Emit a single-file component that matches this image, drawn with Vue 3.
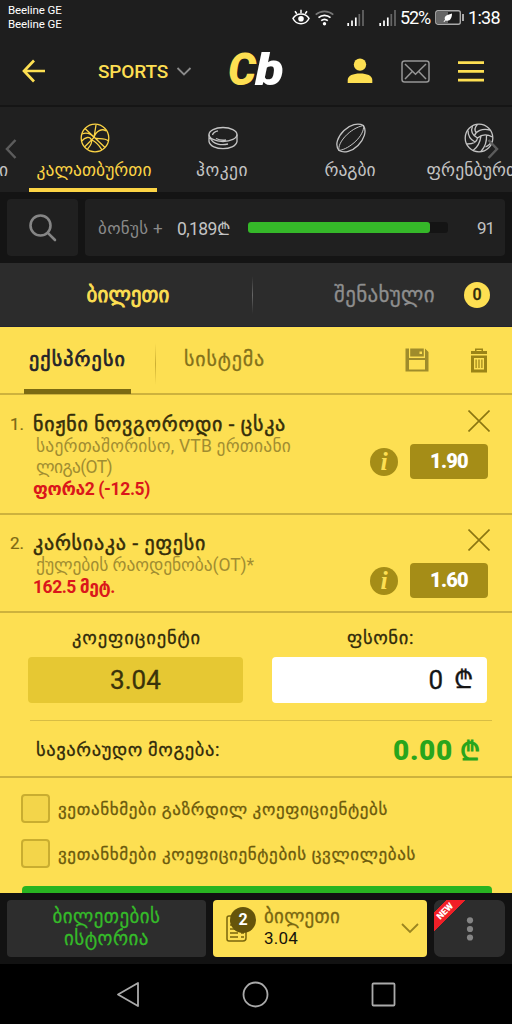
<script setup>
const vFit = {
  mounted(el, { value }) {
    const range = document.createRange()
    range.selectNodeContents(el)
    const natural = range.getBoundingClientRect().width
    const count = [...el.textContent.trim()].length
    el.style.letterSpacing = `${((value - natural) / count).toFixed(3)}px`
  },
}

const sports = [
  { id: 'basket', name: 'კალათბურთი', width: 115, active: true },
  { id: 'hockey', name: 'ჰოკეი', width: 52 },
  { id: 'rugby', name: 'რაგბი', width: 51 },
  { id: 'volley', name: 'ფრენბურთი', width: 103 },
]

const bets = [
  {
    no: '1.',
    teams: 'ნიჟნი ნოვგოროდი - ცსკა',
    teamsWidth: 253,
    league: [
      { text: 'საერთაშორისო, VTB ერთიანი', width: 255 },
      { text: 'ლიგა(OT)', width: 76 },
    ],
    pick: 'ფორა2 (-12.5)',
    pickWidth: 117,
    odd: '1.90',
  },
  {
    no: '2.',
    teams: 'კარსიაკა - ეფესი',
    teamsWidth: 173,
    league: [{ text: 'ქულების რაოდენობა(OT)*', width: 218 }],
    pick: '162.5 მეტ.',
    pickWidth: 82,
    odd: '1.60',
  },
]

const agreements = [
  { text: 'ვეთანხმები გაზრდილ კოეფიციენტებს', width: 330 },
  { text: 'ვეთანხმები კოეფიციენტების ცვლილებას', width: 358 },
]

const progress = 91
</script>

<template>
  <div class="screen">
    <div class="status">
      <div class="carrier">Beeline GE<br />Beeline GE</div>
      <div class="indicators">
        <svg class="eye" width="18" height="17" viewBox="0 0 18 17" fill="none" stroke="#fff" stroke-width="1.5">
          <path d="M1 9.5C4.5 3.6 13.500 3.600 17 9.500C13.500 16.500 4.500 16.500 1 9.500Z" />
          <circle cx="9" cy="9.700" r="2.800" fill="#fff" stroke="none" />
          <path d="M9 4V.800M4.800 4.800L3 2.200M13.200 4.800L15 2.200" />
        </svg>
        <svg class="wifi" width="19" height="16" viewBox="0 0 19 16" fill="none" stroke-width="1.600">
          <path d="M.700 4.700C5.800.200 13.200.200 18.300 4.700" stroke="#777" />
          <path d="M3.500 7.700C7 4.600 12 4.600 15.500 7.700M6.200 10.700C8.200 9 10.800 9 12.800 10.700" stroke="#fff" />
          <circle cx="9.500" cy="13.700" r="1.700" fill="#fff" />
        </svg>
        <svg v-for="n in 2" :key="n" :class="['signal', `signal-${n}`]" width="17" height="16" viewBox="0 0 17 16" stroke-width="1.700">
          <path d="M1.200 16V13M5 16V10.500M8.800 16V7.500" stroke="#fff" />
          <path d="M12.300 16V4M16 16V0" stroke="#666" />
        </svg>
        <span class="percent" v-fit="30">52%</span>
        <svg class="battery" width="29" height="15" viewBox="0 0 29 15">
          <rect x=".800" y=".800" width="24.500" height="13.400" rx="2" fill="none" stroke="#aaa" stroke-width="1.400" />
          <rect x="2" y="2" width="11" height="11" fill="#666" />
          <path d="M8.500 11.500L10 9.700C8.500 5.500 13 5 17 3.500C17 8 15 12 10.600 10.400L9.300 12Z" fill="#fff" />
          <path d="M28 4V11" stroke="#ccc" stroke-width="1.600" />
        </svg>
        <span class="clock" v-fit="32">1:38</span>
      </div>
    </div>

    <header class="header">
      <svg class="back" width="24" height="24" viewBox="0 0 24 24" fill="none" stroke="#fddf52" stroke-width="2.700">
        <path d="M12 1.500L2 12L12 22.500M2 12H23" />
      </svg>
      <div class="mode">
        <span v-fit="70">SPORTS</span>
        <svg width="16" height="9" viewBox="0 0 16 9" fill="none" stroke="#8b8b8b" stroke-width="1.800"><path d="M1.500 1L8 7.500L14.500 1" /></svg>
      </div>
      <div class="logo"><span class="logo-c">C</span><span class="logo-b">b</span></div>
      <svg class="user" width="26" height="26" viewBox="0 0 26 26" fill="#fddf52">
        <circle cx="13" cy="6.600" r="6.200" />
        <path d="M.700 25V22C.700 17.500 6 15.400 13 15.400S25.300 17.500 25.300 22V25Z" />
      </svg>
      <svg class="mail" width="29" height="23" viewBox="0 0 29 23" fill="none" stroke="#969696" stroke-width="1.500">
        <rect x="1" y="1" width="27" height="21" rx="2.500" />
        <path d="M4 4L14.500 14.200L25 4M4 19L11.500 11.300M25 19L17.500 11.300" />
      </svg>
      <svg class="menu" width="26" height="21" viewBox="0 0 26 21" stroke="#fddf52" stroke-width="2.700"><path d="M0 1.700H26M0 10.400H26M0 19.100H26" /></svg>
    </header>

    <nav class="sports">
      <div class="sport sport-cut"><span class="sport-name">ი</span></div>
      <div v-for="s in sports" :key="s.id" :class="['sport', { active: s.active }]">
        <svg width="30" height="30" viewBox="0 0 30 30" fill="none" stroke="currentColor" stroke-width="1.300">
          <template v-if="s.id === 'basket'">
            <circle cx="15" cy="15" r="13.800" />
            <path d="M5 5.500L25 24.500M4.500 24L14 14.500L16 2M14 14.500C16 8 22 5 26 8M2 11C7 9 11 11 14 14.500C17 17 24 14 28.500 18M1.800 18C5 14 10 13 11.500 17C12.500 21 9 24 7.500 26M12 17C18 20 20 24 22 27" />
          </template>
          <template v-else-if="s.id === 'hockey'">
            <ellipse cx="15" cy="11.500" rx="14" ry="7" />
            <path d="M1 11.500V18.500C3 28 27 28 29 18.500V11.500M2 14.500C5 22 14 22.500 20 21M4.500 12C5 9.500 7 8.500 10 7.800M8 15.500C11 17 15 17.500 18 17" />
          </template>
          <template v-else-if="s.id === 'rugby'">
            <path d="M3 27.500C-1.500 22 1.500 14 8 7.500C14 1.500 22 -.500 27.500 2.500C31 8 28 16.500 22 22.500C16 28.500 8 30.500 3 27.500Z" />
            <path d="M3 27.500C1 20 14 5 27.500 2.500M3 27.500C14 26 29 12 27.500 2.500" stroke-width="1" />
          </template>
          <template v-else>
            <circle cx="15" cy="15" r="13.800" />
            <path d="M13.500 15C8 12 6.500 8 8.500 3M10.500 12.500C12 8 18 5 26 7M12 9.500C9.500 6 12 3 13.500 1.300M13.500 15C18 11 24 11.500 28.500 14M17 12.800C16 20 14 24 9 27.500M22.500 12C23 19 21 24 17 28.500M13.500 15C13 19 9 21 3 21M11 19C7 17 4 14 4 7.500M28 18C26 22 24 23 21.500 24" />
          </template>
        </svg>
        <span class="sport-name" v-fit="s.width">{{ s.name }}</span>
      </div>
      <svg class="scroll prev" width="12" height="20" viewBox="0 0 12 20"><path d="M10.500 1L2 10L10.500 19" /></svg>
      <svg class="scroll next" width="12" height="20" viewBox="0 0 12 20"><path d="M1.500 1L10 10L1.500 19" /></svg>
    </nav>

    <div class="bonus-row">
      <div class="search">
        <svg width="28" height="28" viewBox="0 0 28 28" fill="none" stroke="#858585" stroke-width="2.600" stroke-linecap="round"><circle cx="11.500" cy="11.500" r="10" /><path d="M18.800 18.800L26 26" /></svg>
      </div>
      <div class="bonus">
        <span class="bonus-label" v-fit="65">ბონუს +</span>
        <span class="bonus-sum" v-fit="53">0,189₾</span>
        <div class="track"><div class="fill" :style="{ width: progress + '%' }"></div></div>
        <span class="bonus-value" v-fit="17">{{ progress }}</span>
      </div>
    </div>

    <div class="slip-tabs">
      <div class="slip-tab current"><span v-fit="83">ბილეთი</span></div>
      <i class="slip-sep"></i>
      <div class="slip-tab saved"><span v-fit="101">შენახული</span><b>0</b></div>
    </div>

    <main class="slip">
      <div class="types">
        <div class="type on"><span v-fit="97">ექსპრესი</span></div>
        <i class="type-sep"></i>
        <div class="type off"><span v-fit="81">სისტემა</span></div>
        <svg class="save" width="24" height="24" viewBox="0 0 24 24" fill="#9f8c2b">
          <path fill-rule="evenodd" d="M.500.500H20L23.500 4V23.500H.500ZM4 12V21.500H20V12ZM4 .500V10H20V.500H18.800V8.500H5.200V.500ZM14.500 3.500V6H17V3.500Z" />
        </svg>
        <svg class="trash" width="18" height="25" viewBox="0 0 18 25" fill="#9b8417">
          <path fill-rule="evenodd" d="M5 3V.500H13V3H17V6H1V3ZM6.500 2V3H11.500V2ZM1 7.500H17V24.500H1ZM4 10V21.500H14V10ZM5.500 11.500H6.700V20H5.500ZM8.400 11.500H9.600V20H8.400ZM11.300 11.500H12.500V20H11.300Z" />
        </svg>
      </div>

      <section v-for="b in bets" :key="b.no" class="bet">
        <span class="bet-no">{{ b.no }}</span>
        <div class="bet-info">
          <div class="teams"><span v-fit="b.teamsWidth">{{ b.teams }}</span></div>
          <div v-for="l in b.league" :key="l.text" class="league"><span v-fit="l.width">{{ l.text }}</span></div>
          <div class="pick"><span v-fit="b.pickWidth">{{ b.pick }}</span></div>
        </div>
        <div class="bet-side">
          <svg class="close" width="22" height="22" viewBox="0 0 22 22" stroke="#8b7611" stroke-width="1.600"><path d="M.500.500L21.500 21.500M21.500.500L.500 21.500" /></svg>
          <div class="odd-row">
            <span class="info">i</span>
            <span class="odd"><span v-fit="38">{{ b.odd }}</span></span>
          </div>
        </div>
      </section>

      <section class="stake">
        <div class="stake-grid">
          <div class="stake-label"><span v-fit="129">კოეფიციენტი</span></div>
          <div class="stake-label"><span v-fit="67">ფსონი:</span></div>
          <div class="coef"><span v-fit="51">3.04</span></div>
          <div class="amount"><span>0</span><span class="lari">₾</span></div>
        </div>
        <div class="win">
          <span class="win-label" v-fit="184">სავარაუდო მოგება:</span>
          <span class="win-sum"><span v-fit="60">0.00</span><span class="lari">₾</span></span>
        </div>
      </section>

      <section class="agree">
        <div v-for="a in agreements" :key="a.text" class="agree-row">
          <i class="box"></i><span v-fit="a.width">{{ a.text }}</span>
        </div>
      </section>
      <div class="place"></div>
    </main>

    <footer class="dock">
      <div class="history"><span v-fit="108">ბილეთების</span><span v-fit="85">ისტორია</span></div>
      <div class="ticket">
        <div class="ticket-icon">
          <svg width="22" height="27" viewBox="0 0 22 27" fill="none" stroke="#79660d" stroke-width="1.500">
            <path d="M3 1H18Q20 1 20 3V23Q20 26 17 26H3Q1 26 1 24V3Q1 1 3 1ZM4 6H9M4 10H9M4 14H9M4 18H12M15 18H18M4 22H12M15 22H18" />
          </svg>
          <b>2</b>
        </div>
        <div class="ticket-text"><span class="ticket-name" v-fit="76">ბილეთი</span><span class="ticket-odd" v-fit="34">3.04</span></div>
        <svg class="down" width="18" height="11" viewBox="0 0 18 11" fill="none" stroke="#9b8520" stroke-width="1.800"><path d="M1 1L9 9L17 1" /></svg>
      </div>
      <div class="more">
        <svg width="8" height="24" viewBox="0 0 8 24" fill="#858585"><circle cx="4" cy="3.300" r="3.100" /><circle cx="4" cy="12" r="3.100" /><circle cx="4" cy="20.500" r="3.100" /></svg>
        <div class="ribbon"><span>NEW</span></div>
      </div>
    </footer>

    <div class="android">
      <svg width="24" height="27" viewBox="0 0 24 27"><path d="M2 13.500L22 2V25Z" /></svg>
      <svg width="27" height="27" viewBox="0 0 27 27"><circle cx="13.500" cy="13.500" r="12" /></svg>
      <svg width="25" height="25" viewBox="0 0 25 25"><rect x="1.500" y="1.500" width="22" height="22" rx="1" /></svg>
    </div>
  </div>
</template>

<style>
body { background: #000; }
</style>

<style scoped>
* { box-sizing: border-box; }
.screen { width: 512px; height: 1024px; overflow: hidden; background: #1e1e1e; font-family: Roboto, "DejaVu Sans", sans-serif; display: flex; flex-direction: column; }
.screen > * { flex: none; }
span { white-space: nowrap; }
svg { display: block; flex: none; }

.status { height: 38px; display: flex; justify-content: space-between; color: #fff; padding: 0 12px 0 8px; }
.carrier { font-size: 11.500px; line-height: 13.500px; padding-top: 4px; letter-spacing: -.100px; }
.indicators { display: flex; align-items: center; height: 35px; font-size: 18px; }
.wifi { margin-left: 5px; }
.signal-1 { margin-left: 13px; }
.signal-2 { margin: 0 4px 0 15px; }
.battery { margin: 0 4px 0 5px; }

.header { height: 67px; display: flex; align-items: center; padding: 0 28px 1px 22px; }
.mode { display: flex; align-items: center; gap: 8px; margin-left: 52px; width: 130px; color: #fddf52; font-size: 19px; font-weight: 500; }
.logo { width: 58px; height: 46px; display: flex; font: italic 900 44px/44px Roboto, sans-serif; }
.logo-c { color: #fddf52; width: 27px; height: 44px; }
.logo-b { color: #fff; width: 26px; height: 44px; transform: scaleX(1.200); transform-origin: left; }
.user { margin-left: 61px; }
.mail { margin-left: 28px; }
.menu { margin-left: 28px; }

.sports { position: relative; height: 87px; display: flex; background: #202020; border-top: 2px solid #151515; overflow: hidden; color: #c4c4c4; }
.sport { flex: none; width: 128px; height: 85px; display: flex; flex-direction: column; align-items: center; padding: 16px 0 0 2px; }
.sport svg { margin-left: 1px; }
.sport-cut { width: 29px; padding: 51px 0 0; align-items: flex-start; }
.sport-cut .sport-name { margin-left: -1px; }
.sport-name { font-size: 17.500px; line-height: 24px; }
.sport svg + .sport-name { margin-top: 5px; }
.active { color: #fcd445; border-bottom: 4px solid #fcd445; }
.scroll { position: absolute; top: 32px; fill: none; stroke: #5c5c5c; stroke-width: 2.500; }
.prev { left: 5px; }
.next { right: 13px; }

.bonus-row { height: 71px; display: flex; gap: 7px; padding: 7px; background: #141414; }
.search { width: 71px; height: 57px; display: grid; place-items: center; border-radius: 4px; background: #202020; }
.bonus { flex: 1; height: 57px; display: flex; align-items: center; border-radius: 4px; background: #202020; padding: 0 11px 0 13px; color: #c3c3c3; }
.bonus-label { width: 79px; font-size: 17px; color: #8a8a8a; }
.bonus-sum { width: 71px; font-size: 17.500px; }
.track { width: 200px; height: 11px; border-radius: 3px; background: #141414; }
.fill { height: 11px; border-radius: 3px; background: #35b829; }
.bonus-value { margin-left: auto; font-size: 17px; }

.slip-tabs { height: 64px; display: grid; grid-template-columns: 252px 1px 1fr; align-items: center; background: #2c2c2c; border-bottom: 1px solid #222333; font-size: 21px; }
.slip-tab { display: flex; align-items: center; justify-content: center; }
.current { color: #fddf52; padding-left: 4px; -webkit-text-stroke: .8px; }
.slip-sep { width: 1px; height: 38px; background: linear-gradient(transparent, #666, transparent); }
.saved { color: #8e8e8e; justify-content: flex-end; padding-right: 22px; gap: 29px; -webkit-text-stroke: .3px; }
.saved b { width: 26px; height: 26px; border-radius: 50%; background: #fddf52; color: #302b0d; font: 500 16px/26px Roboto, sans-serif; text-align: center; }

.slip { height: 566px; background: #fddf52; overflow: hidden; }
.types { height: 68px; display: flex; align-items: center; border-bottom: 2px solid #cdb23d; padding: 0 24px; font-size: 20px; }
.type { height: 68px; display: flex; justify-content: center; line-height: 67px; }
.on { width: 107px; color: #23232a; -webkit-text-stroke: .7px; border-bottom: 5px solid #7b6a13; }
.type-sep { width: 1px; height: 42px; margin: 8px 27px 0 24px; background: linear-gradient(transparent, #cbae31, transparent); }
.off { width: 83px; color: #83711b; -webkit-text-stroke: .3px; }
.save { margin-left: auto; }
.trash { margin-left: 41px; }

.bet { display: flex; border-bottom: 2px solid #cdb23d; padding: 17px 0 13px 10px; }
.bet-no { width: 23px; font-size: 17px; line-height: 25px; color: #7c6914; -webkit-text-stroke: .2px; }
.bet-info { flex: 1; }
.teams { font-size: 20px; line-height: 24px; color: #342d0a; -webkit-text-stroke: .5px; }
.league { font-size: 17.500px; line-height: 21px; color: #a18d31; padding-left: 3px; }
.pick { font-size: 17.500px; line-height: 23px; color: #da171b; font-weight: 700; }
.bet:nth-of-type(1) { height: 120px; }
.bet:nth-of-type(2) { height: 98px; padding-top: 16px; }
.bet-side { width: 118px; margin-right: 24px; display: flex; flex-direction: column; align-items: flex-end; margin-top: -2px; }
.close { margin-right: -2px; }
.odd-row { display: flex; align-items: center; gap: 12px; margin-top: 12px; }
.info { width: 28px; height: 28px; border-radius: 50%; background: #a58d17; color: #fddf52; text-align: center; font: italic 700 26px/27px "Liberation Serif", serif; }
.odd { width: 78px; height: 35px; border-radius: 4px; background: #a58d17; color: #fff; text-align: center; font: 900 20px/35px Roboto, sans-serif; }

.stake { height: 165px; border-bottom: 2px solid #cdb23d; padding: 14px 20px 0 28px; }
.stake-grid { display: grid; grid-template-columns: 215px 215px; grid-template-rows: 30px 46px; column-gap: 29px; border-bottom: 1px solid #d8bd44; margin-left: 2px; height: 94px; }
.stake-label { height: 30px; text-align: center; font-size: 18.500px; line-height: 23px; color: #302a0b; -webkit-text-stroke: .3px; margin-left: -2px; }
.coef, .amount { height: 46px; border-radius: 4px; margin-left: -2px; width: 215px; font-size: 26px; line-height: 46px; -webkit-text-stroke: .3px; }
.coef { background: #e6c833; color: #3a320a; text-align: center; }
.amount { background: #fff; color: #151515; display: flex; justify-content: flex-end; gap: 11px; padding-right: 14px; }
.lari { font-size: 25px; }
.win { height: 56px; display: flex; align-items: center; justify-content: space-between; padding: 2px 12px 0 8px; }
.win-label { font-size: 18.500px; color: #302a0b; -webkit-text-stroke: .3px; }
.win-sum { display: flex; align-items: center; gap: 7px; font-size: 28px; font-weight: 900; color: #28a51c; }
.win-sum .lari { font-size: 26px; font-weight: 700; }

.agree { padding: 16px 21px 0; display: flex; flex-direction: column; gap: 16px; }
.agree-row { display: flex; align-items: center; gap: 8px; height: 29px; font-size: 17px; color: #6b5a0d; -webkit-text-stroke: .3px; }
.box { width: 29px; height: 29px; border: 2px solid #c9ad30; border-radius: 4px; background: #f3d54a; }
.place { height: 48px; margin: 18px 20px 0 22px; border-radius: 4px; background: #28b321; }

.dock { height: 71px; display: flex; gap: 7px; padding: 7px; background: #121212; }
.history, .ticket, .more { height: 57px; border-radius: 4px; background: #2d2d2d; }
.history { width: 199px; display: flex; flex-direction: column; align-items: center; padding-top: 6px; font-size: 19px; line-height: 22px; color: #35bb29; -webkit-text-stroke: .3px; }
.ticket { width: 214px; display: flex; align-items: center; background: #fddf52; padding: 0 8px 0 13px; }
.ticket-icon { position: relative; width: 36px; }
.ticket-icon b { position: absolute; left: 4px; top: -8px; width: 26px; height: 26px; border-radius: 50%; background: #65540b; color: #fff; font: 700 16px/26px Roboto, sans-serif; text-align: center; }
.ticket-text { display: flex; flex-direction: column; align-items: flex-start; line-height: 20px; height: 46px; margin-left: 2px; }
.ticket-name { font-size: 19px; line-height: 22px; color: #796711; -webkit-text-stroke: .3px; }
.ticket-odd { font-size: 17px; color: #16130a; }
.down { margin-left: auto; }
.more { position: relative; width: 71px; display: grid; place-items: center; border-radius: 7px; overflow: hidden; }
.ribbon { position: absolute; left: 0; top: 0; width: 31px; height: 31px; background: linear-gradient(135deg, #2d2d2d 0 20%, #f01f27 20% 50%, transparent 50%); }
.ribbon span { display: block; width: 30px; color: #fff; font: 900 9px/10px Roboto, sans-serif; text-align: center; transform: translate(-4px, 6px) rotate(-45deg); }
.android { height: 60px; display: flex; align-items: center; background: #000; padding-left: 116px; gap: 102px; }
.android svg { fill: none; stroke: #aaa; stroke-width: 1.800; stroke-linejoin: round; }
</style>
